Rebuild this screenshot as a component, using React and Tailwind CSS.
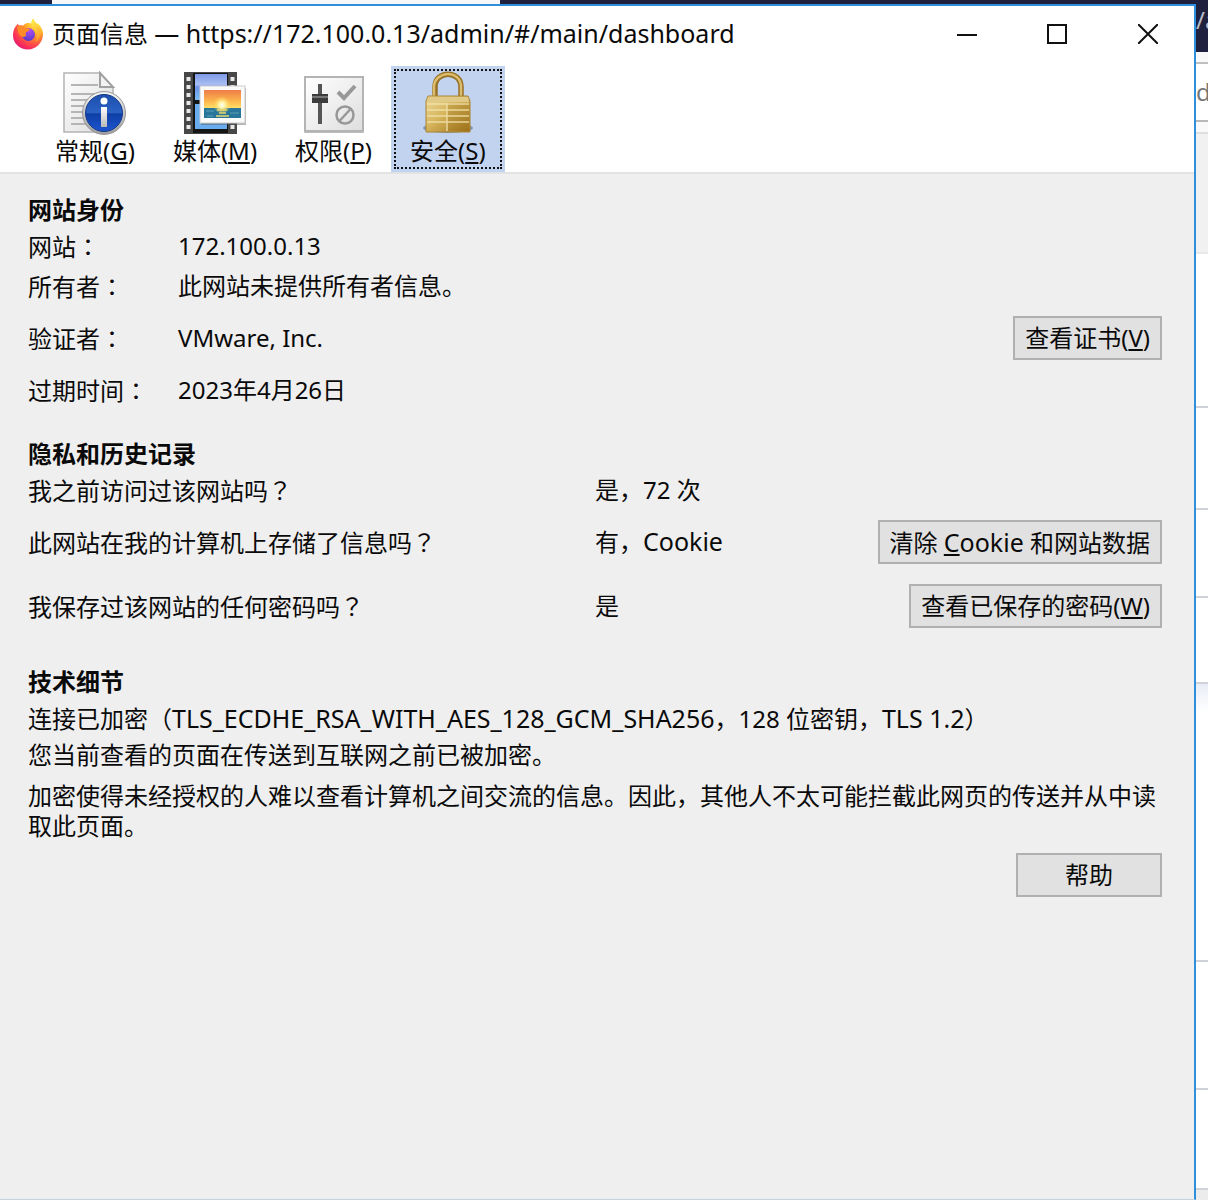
import { clsx } from "clsx";

const FirefoxIcon = () => (
  <svg viewBox="0 0 32 32" className="h-8 w-8 shrink-0" aria-hidden="true">
    <defs>
      <radialGradient id="fxBody" cx="0.78" cy="0.15" r="1">
        <stop offset="0" stopColor="#fff04e" />
        <stop offset="0.3" stopColor="#ffb92a" />
        <stop offset="0.58" stopColor="#ff6a3a" />
        <stop offset="0.82" stopColor="#fb2f58" />
        <stop offset="1" stopColor="#d81b7a" />
      </radialGradient>
      <radialGradient id="fxGlobe" cx="0.6" cy="0.2" r="0.9">
        <stop offset="0" stopColor="#b14cf0" />
        <stop offset="1" stopColor="#4a38c8" />
      </radialGradient>
      <linearGradient id="fxTail" x1="0" y1="0" x2="0.4" y2="1">
        <stop offset="0" stopColor="#fff44f" />
        <stop offset="1" stopColor="#ffa52c" />
      </linearGradient>
    </defs>
    <path
      d="M3.5 8.5c.8-.8 1.5-1.600 2-2.900.5 1 .9 1.500 1.600 2 1.400-.4 2.800-.3 4 .1C12.500 6 14 5.200 16 5c1.600-.2 2.300.2 3.500.6C19.300 3.500 20 1.800 21.500.5c.2 2.200 2 3.800 3.700 5.500.3-.2.400-.6.300-1.100 3.400 3 5.800 7.300 5.500 12.100C30.500 25 24 31.500 16 31.500S1 25.500 1 17.500c0-3.500.8-6.500 2.500-9z"
      fill="url(#fxBody)"
    />
    <circle cx="16.500" cy="16.500" r="6.500" fill="url(#fxGlobe)" />
    <path
      d="M5 9c2.500-1.300 5-1.300 7 .2 1.400 1 2.800 1.300 5 1.300 1 .2.800 1.200.1 1.900-1.300 1.100-2.900 1.300-3.400 2.700-.2 1 0 2 .6 2.700-2 2-5.300 1.200-6.800-1.300C6 14.500 6 12 5 9z"
      fill="#ff8a28"
    />
    <path
      d="M19.500 5.600C19.400 3.500 20 1.800 21.500.5c.2 3.500 4.200 5 6 9.500 2 5.200.5 11-4 14 2.300-4.500 2-9-.6-12-1.500-2-3.500-3.400-3.400-6.400z"
      fill="url(#fxTail)"
    />
  </svg>
);

const GeneralIcon = () => (
  <svg viewBox="0 0 64 64" className="h-16 w-16" aria-hidden="true">
    <defs>
      <linearGradient id="page" x1="0" y1="0" x2="1" y2="1">
        <stop offset="0" stopColor="#ffffff" />
        <stop offset="1" stopColor="#dcdcdc" />
      </linearGradient>
      <linearGradient id="ring" x1="0" y1="0" x2="0" y2="1">
        <stop offset="0" stopColor="#f4f4f4" />
        <stop offset="1" stopColor="#9c9c9c" />
      </linearGradient>
      <linearGradient id="info" x1="0" y1="0" x2="0" y2="1">
        <stop offset="0" stopColor="#1d4fae" />
        <stop offset="0.5" stopColor="#2a62c4" />
        <stop offset="0.52" stopColor="#0f3fa5" />
        <stop offset="1" stopColor="#1b55d0" />
      </linearGradient>
      <linearGradient id="letter" x1="0" y1="0" x2="0" y2="1">
        <stop offset="0" stopColor="#ffffff" />
        <stop offset="1" stopColor="#b8b8b8" />
      </linearGradient>
    </defs>
    <path d="M1 2h36l13 15v44H1z" fill="url(#page)" stroke="#b4b4b4" strokeWidth="1.500" />
    <path d="M37 2v14h13z" fill="#f3f3f3" stroke="#a0a0a0" strokeWidth="2" />
    <path
      d="M8 14h27M8 23h32M8 29h24M8 35h20M8 41h18M8 47h18M8 53h20"
      stroke="#b5b5b5"
      strokeWidth="2"
    />
    <circle cx="41" cy="42" r="21.500" fill="url(#ring)" stroke="#999999" />
    <circle cx="41" cy="42" r="18.500" fill="url(#info)" stroke="#12388a" />
    <circle cx="41" cy="30" r="3.500" fill="#ffffff" />
    <rect x="38" y="36" width="6" height="20" fill="url(#letter)" />
  </svg>
);

const MediaIcon = () => (
  <svg viewBox="0 0 64 64" className="h-16 w-16" aria-hidden="true">
    <defs>
      <linearGradient id="film" x1="0" y1="0" x2="0" y2="1">
        <stop offset="0" stopColor="#7d9ae6" />
        <stop offset="0.4" stopColor="#a9bdf4" />
        <stop offset="0.5" stopColor="#6e92e8" />
        <stop offset="1" stopColor="#79bdf4" />
      </linearGradient>
      <linearGradient id="sky" x1="0" y1="0" x2="0" y2="1">
        <stop offset="0" stopColor="#ee7c49" />
        <stop offset="0.6" stopColor="#fbb44c" />
        <stop offset="1" stopColor="#ffdf67" />
      </linearGradient>
      <radialGradient id="sun">
        <stop offset="0" stopColor="#ffffff" />
        <stop offset="0.35" stopColor="#fff3a0" />
        <stop offset="1" stopColor="#ffd050" stopOpacity="0" />
      </radialGradient>
    </defs>
    <rect x="1" y="1" width="53" height="62" fill="#474747" />
    <rect x="10" y="2" width="35" height="60" fill="#151515" />
    <rect x="12" y="3" width="32" height="26" fill="url(#film)" />
    <rect x="12" y="33" width="32" height="25" fill="#69adee" />
    <path d="M5.500 6v56M49.500 6v56" stroke="#e9e9e9" strokeWidth="4" strokeDasharray="4 4" />
    <rect x="18" y="17" width="45" height="37" fill="#555555" opacity="0.450" />
    <rect x="17" y="15" width="45" height="37" fill="#fafafa" stroke="#cccccc" />
    <rect x="21" y="19" width="37" height="18" fill="url(#sky)" />
    <rect x="21" y="37" width="37" height="10" fill="#28769a" />
    <circle cx="39" cy="34" r="9" fill="url(#sun)" />
    <path d="M34 39h10M36 42h7M33 45h13" stroke="#e5d66f" strokeWidth="1.500" />
    <path d="M23 40h8M47 42h9M24 45h6" stroke="#5ea0b4" />
  </svg>
);

const PermissionsIcon = () => (
  <svg viewBox="0 0 64 64" className="h-16 w-16" aria-hidden="true">
    <defs>
      <linearGradient id="panel" x1="0" y1="0" x2="1" y2="1">
        <stop offset="0" stopColor="#ffffff" />
        <stop offset="1" stopColor="#dedede" />
      </linearGradient>
    </defs>
    <rect x="2" y="6" width="60" height="56" rx="1" fill="#bcbcbc" />
    <rect x="3" y="6" width="58" height="54" fill="url(#panel)" stroke="#b4b4b4" strokeWidth="2" />
    <rect x="16" y="13" width="4" height="40" fill="#555555" />
    <rect x="10" y="23" width="16" height="9" fill="#3c3c3c" />
    <path d="M10 26h16" stroke="#777777" strokeWidth="2" />
    <path d="M36 21l6 6 11-12" fill="none" stroke="#989898" strokeWidth="4" />
    <circle cx="43" cy="44" r="8.500" fill="none" stroke="#989898" strokeWidth="2.500" />
    <path d="M37.500 50l11-12" stroke="#989898" strokeWidth="2.500" />
  </svg>
);

const SecurityIcon = () => (
  <svg viewBox="0 0 64 64" className="h-16 w-16" aria-hidden="true">
    <defs>
      <linearGradient id="lockBody" x1="0" y1="0" x2="1" y2="1">
        <stop offset="0" stopColor="#f0dc9a" />
        <stop offset="0.45" stopColor="#d5b45c" />
        <stop offset="1" stopColor="#a1741a" />
      </linearGradient>
    </defs>
    <ellipse cx="32" cy="57" rx="25" ry="5" fill="#5c6a86" opacity="0.600" />
    <path d="M19 29V16c0-17 26-17 26 0v13" fill="none" stroke="#977126" strokeWidth="5.500" />
    <path d="M18 29V16c0-16 26-18 27-1v13" fill="none" stroke="#dcbd6d" strokeWidth="2.500" />
    <path d="M12 25h40l2 5v31H10V30z" fill="url(#lockBody)" stroke="#a98435" />
    <path d="M12 26h40l1 5H11z" fill="#e1c988" />
    <rect x="31" y="32" width="22" height="28" fill="#94670f" opacity="0.250" />
    <path
      d="M11 33h42M11 39h42M11 45h42M11 51h42M31 32v28"
      stroke="#f3e3ac"
      strokeWidth="1.500"
      opacity="0.850"
    />
  </svg>
);

const TABS = [
  { id: "general", label: "常规", accessKey: "G", Icon: GeneralIcon },
  { id: "media", label: "媒体", accessKey: "M", Icon: MediaIcon },
  { id: "permissions", label: "权限", accessKey: "P", Icon: PermissionsIcon },
  { id: "security", label: "安全", accessKey: "S", Icon: SecurityIcon }
];

const AccessKey = ({ children }) => (
  <span className="underline decoration-2 underline-offset-2">{children}</span>
);

// Latin runs are set one pixel larger to sit evenly beside the Chinese text
const Latin = ({ children }) => <span className="text-[25px]">{children}</span>;

const DialogButton = ({ className, children }) => (
  <button
    type="button"
    className={clsx(
      "h-11 whitespace-nowrap border-2 border-[#b0b0b0] bg-[#e1e1e1] px-2.5 leading-9",
      className
    )}
  >
    {children}
  </button>
);

const SectionTitle = ({ children }) => (
  <h2 className="h-9 font-bold leading-9">{children}</h2>
);

// The JP face centres full-width punctuation in its cell
const FieldName = ({ children }) => (
  <th scope="row" className="w-[150px] p-0 text-left font-normal">
    {children}
    <span className="font-['Noto_Sans_CJK_JP',sans-serif]">：</span>
  </th>
);

const Question = ({ children }) => (
  <th scope="row" className="w-1/2 p-0 text-left font-normal">
    {children}
    <span className="font-['Noto_Sans_CJK_JP',sans-serif]">？</span>
  </th>
);

const TitleBar = () => (
  <header className="flex h-15 items-center pb-1 pl-3">
    <FirefoxIcon />
    <h1 className="ml-2 flex-1">
      页面信息 <Latin>— https://172.100.0.13/admin/#/main/dashboard</Latin>
    </h1>
    <div className="flex">
      <button type="button" aria-label="最小化" className="flex h-14 w-[90px] items-center justify-center">
        <svg viewBox="0 0 20 20" className="h-5 w-5" stroke="#111111" strokeWidth="2">
          <path d="M0 11h20" />
        </svg>
      </button>
      <button type="button" aria-label="最大化" className="flex h-14 w-[90px] items-center justify-center">
        <svg viewBox="0 0 20 20" className="h-5 w-5" fill="none" stroke="#111111" strokeWidth="2">
          <path d="M1 1h18v18H1z" />
        </svg>
      </button>
      <button type="button" aria-label="关闭" className="flex h-14 w-[92px] items-center justify-center">
        <svg viewBox="0 0 20 20" className="h-5 w-5" stroke="#111111" strokeWidth="2">
          <path d="M0 0l20 20M20 0L0 20" />
        </svg>
      </button>
    </div>
  </header>
);

const Toolbar = ({ active }) => (
  <nav className="flex border-b-2 border-[#e3e3e3] pl-9">
    {TABS.map(({ id, label, accessKey, Icon }) => (
      <button
        key={id}
        type="button"
        aria-pressed={id === active}
        className={clsx("p-[3px]", id === active && "bg-[#c2d3ef]")}
      >
        <span
          className={clsx(
            "flex flex-col items-center border-2 border-dotted px-3.5",
            id === active ? "border-[#111111]" : "border-transparent"
          )}
        >
          <Icon />
          <span className="leading-8">
            {label}(<AccessKey>{accessKey}</AccessKey>)
          </span>
        </span>
      </button>
    ))}
  </nav>
);

const Identity = () => (
  <section>
    <SectionTitle>网站身份</SectionTitle>
    <table className="w-full border-collapse">
      <tbody>
        <tr className="h-9">
          <FieldName>网站</FieldName>
          <td className="p-0">172.100.0.13</td>
          <td />
        </tr>
        <tr className="h-11">
          <FieldName>所有者</FieldName>
          <td className="p-0">此网站未提供所有者信息。</td>
          <td />
        </tr>
        <tr className="h-15">
          <FieldName>验证者</FieldName>
          <td className="p-0">VMware, Inc.</td>
          <td className="p-0 text-right">
            <DialogButton>
              查看证书(<AccessKey>V</AccessKey>)
            </DialogButton>
          </td>
        </tr>
        <tr className="h-11">
          <FieldName>过期时间</FieldName>
          <td className="p-0">2023年4月26日</td>
          <td />
        </tr>
      </tbody>
    </table>
  </section>
);

const History = () => (
  <section className="mt-6">
    <SectionTitle>隐私和历史记录</SectionTitle>
    <table className="w-full border-collapse">
      <tbody>
        <tr className="h-9">
          <Question>我之前访问过该网站吗</Question>
          <td className="p-0">是，72 次</td>
          <td />
        </tr>
        <tr className="h-17">
          <Question>此网站在我的计算机上存储了信息吗</Question>
          <td className="p-0">
            有，<Latin>Cookie</Latin>
          </td>
          <td className="p-0 text-right">
            <DialogButton>
              清除{" "}
              <Latin>
                <AccessKey>C</AccessKey>ookie
              </Latin>{" "}
              和网站数据
            </DialogButton>
          </td>
        </tr>
        <tr className="h-15">
          <Question>我保存过该网站的任何密码吗</Question>
          <td className="p-0">是</td>
          <td className="p-0 text-right">
            <DialogButton>
              查看已保存的密码(<AccessKey>W</AccessKey>)
            </DialogButton>
          </td>
        </tr>
      </tbody>
    </table>
  </section>
);

const TechnicalDetails = () => (
  <section className="mt-7">
    <SectionTitle>技术细节</SectionTitle>
    <p className="leading-9">
      连接已加密（<Latin>TLS_ECDHE_RSA_WITH_AES_128_GCM_SHA256</Latin>，128 位密钥，
      <Latin>TLS 1.2</Latin>）
    </p>
    <p className="leading-9">您当前查看的页面在传送到互联网之前已被加密。</p>
    <p className="mt-2 leading-[30px]">
      加密使得未经授权的人难以查看计算机之间交流的信息。因此，其他人不太可能拦截此网页的传送并从中读取此页面。
    </p>
  </section>
);

// Sliver of the browser window that shows past the dialog's right edge
const BrowserEdge = () => (
  <aside className="flex w-3 shrink-0 flex-col overflow-hidden bg-white">
    <div className="h-12 bg-[#20213f] leading-8 text-[#b9b9c6]">/a</div>
    <div className="h-3 border-b-2 border-[#c0c0c0] bg-[#f9f9fa]" />
    <div className="h-14 leading-14 text-[#777777]">d</div>
    <div className="h-[14px] border-y-2 border-t-[#b8b8b8] border-b-[#dedede] bg-[#f9f9fa]" />
    <div className="h-[120px] border-b-2 border-[#e9e9eb] bg-[#f1f1f1]" />
    <div className="h-[154px] border-b-2 border-[#cfd2d8]" />
    <div className="h-[102px] border-b-2 border-[#cfd2d8]" />
    <div className="h-22 border-b-2 border-[#cfd2d8]" />
    <div className="h-[86px] border-b-2 border-[#cfd2d8]" />
    <div className="h-[278px] border-b-2 border-[#cfd2d8] bg-linear-to-b from-[#e8edf5] to-white to-10%" />
    <div className="h-32 border-b-2 border-[#cfd2d8]" />
    <div className="h-[100px] border-b-2 border-[#cfd2d8]" />
    <div className="flex-1 bg-[#ececec]" />
  </aside>
);

const App = () => {
  return (
    <div className="flex min-h-screen flex-col font-['Noto_Sans','Noto_Sans_CJK_SC',sans-serif] text-2xl text-[#0a0a0a]">
      <div className="flex h-1 bg-[#20213f]">
        <div className="ml-[52px] w-[448px] bg-[#f7f7f8]" />
      </div>
      <div className="flex flex-1">
        <div className="flex min-w-0 flex-1 flex-col border-t-2 border-r-2 border-b border-[#2e8fdd] border-b-[#c5d3df] bg-white">
          <TitleBar />
          <Toolbar active="security" />
          <main className="flex-1 bg-[#efefef] pt-[18px] pr-8 pl-7">
            <Identity />
            <History />
            <TechnicalDetails />
            <div className="mt-3 flex justify-end">
              <DialogButton className="w-[146px]">帮助</DialogButton>
            </div>
          </main>
        </div>
        <BrowserEdge />
      </div>
    </div>
  );
};

export default App;
